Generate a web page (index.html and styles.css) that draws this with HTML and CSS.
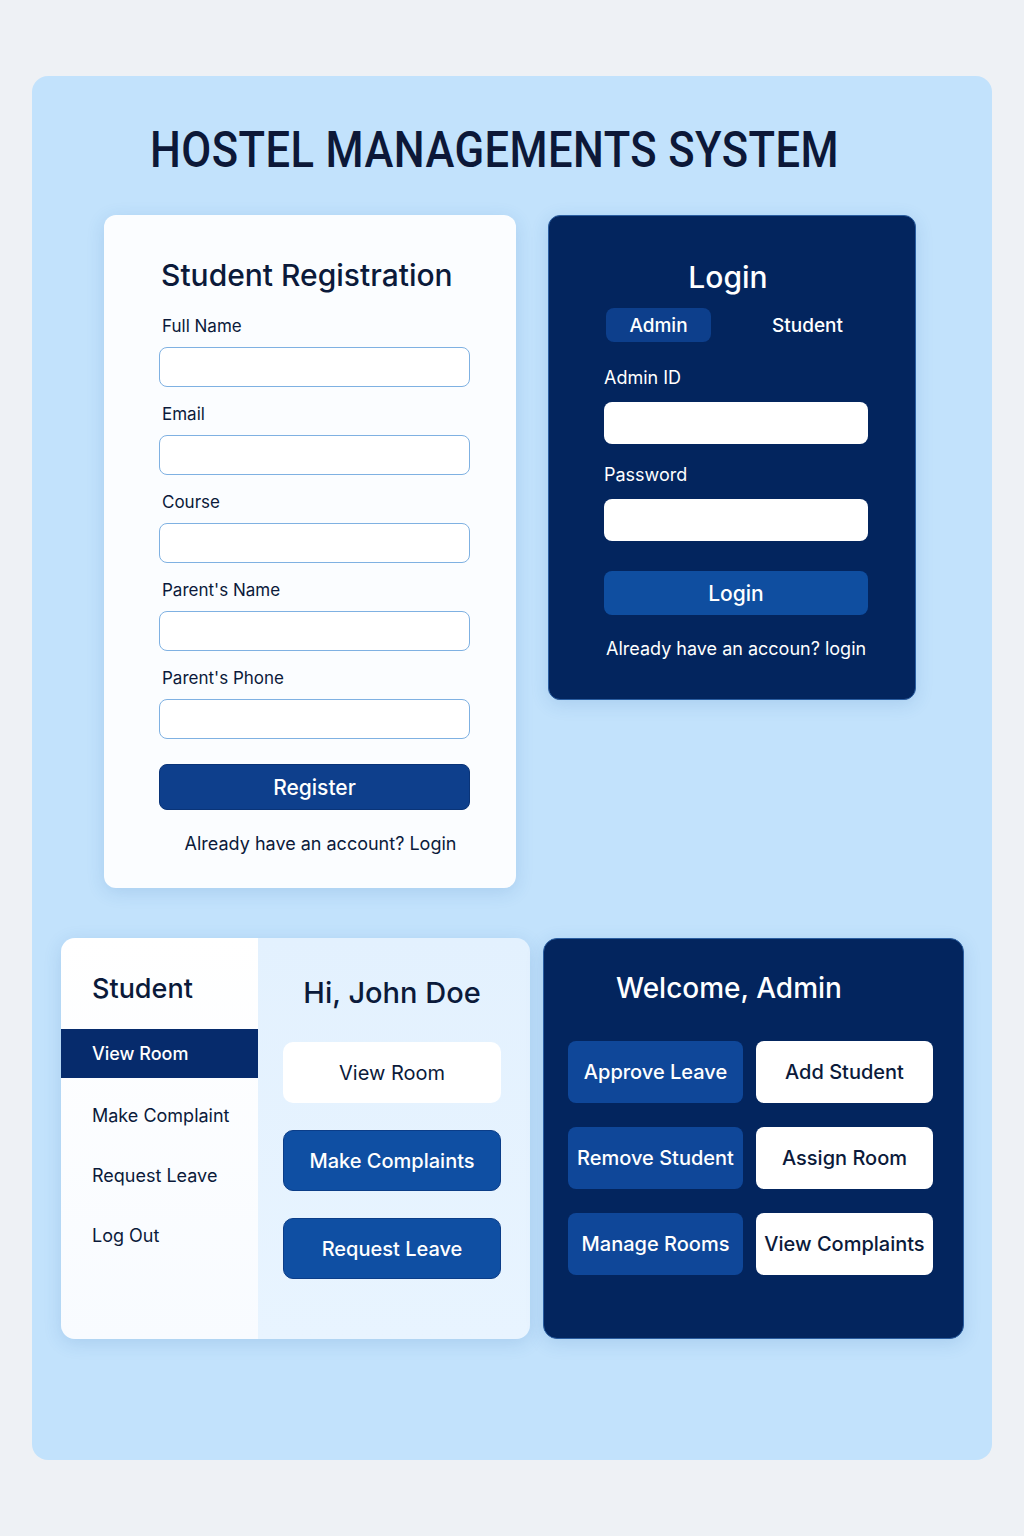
FILE: index.html
```html
<!DOCTYPE html>
<html lang="en">
<head>
<meta charset="utf-8">
<title>Hostel Managements System</title>
<link rel="stylesheet" href="styles.css">
</head>
<body>
<main class="panel">
  <h1 class="page-title">HOSTEL MANAGEMENTS SYSTEM</h1>

  <div class="row-top">
    <section class="card reg">
      <h2 class="reg-title">Student Registration</h2>
      <div class="field">
        <label class="reg-label">Full Name</label>
        <div class="reg-input"></div>
      </div>
      <div class="field">
        <label class="reg-label">Email</label>
        <div class="reg-input"></div>
      </div>
      <div class="field">
        <label class="reg-label">Course</label>
        <div class="reg-input"></div>
      </div>
      <div class="field">
        <label class="reg-label">Parent's Name</label>
        <div class="reg-input"></div>
      </div>
      <div class="field">
        <label class="reg-label">Parent's Phone</label>
        <div class="reg-input"></div>
      </div>
      <button class="reg-btn">Register</button>
      <p class="reg-foot">Already have an account? Login</p>
    </section>

    <section class="card login">
      <h2 class="login-title">Login</h2>
      <div class="tabs">
        <span class="tab active">Admin</span>
        <span class="tab">Student</span>
      </div>
      <label class="login-label first">Admin ID</label>
      <div class="login-input"></div>
      <label class="login-label">Password</label>
      <div class="login-input"></div>
      <button class="login-btn">Login</button>
      <p class="login-foot">Already have an accoun? login</p>
    </section>
  </div>

  <div class="row-bottom">
    <section class="card student">
      <aside class="sidebar">
        <h3 class="side-title">Student</h3>
        <ul class="menu">
          <li class="menu-item active">View Room</li>
          <li class="menu-item">Make Complaint</li>
          <li class="menu-item">Request Leave</li>
          <li class="menu-item">Log Out</li>
        </ul>
      </aside>
      <div class="student-main">
        <h3 class="hi">Hi, John Doe</h3>
        <div class="s-actions">
          <button class="s-btn light">View Room</button>
          <button class="s-btn blue">Make Complaints</button>
          <button class="s-btn blue">Request Leave</button>
        </div>
      </div>
    </section>

    <section class="card admin">
      <h3 class="welcome">Welcome, Admin</h3>
      <div class="a-grid">
        <button class="a-btn blue">Approve Leave</button>
        <button class="a-btn light">Add Student</button>
        <button class="a-btn blue">Remove Student</button>
        <button class="a-btn light">Assign Room</button>
        <button class="a-btn blue">Manage Rooms</button>
        <button class="a-btn light">View Complaints</button>
      </div>
    </section>
  </div>
</main>
</body>
</html>
```

FILE: styles.css
```css
* { box-sizing: border-box; }

body {
  margin: 0;
  background: #eef1f5;
  font-family: "Inter", "Noto Sans", sans-serif;
  color: #0b1a3a;
  padding: 76px 32px 76px 32px;
}

.panel {
  width: 960px;
  height: 1384px;
  background: #c2e2fc;
  border-radius: 16px;
  padding-top: 44px;
}

.page-title {
  margin: 0 0 35px 118px;
  font-family: "Roboto", "Inter", sans-serif;
  font-weight: 500;
  font-size: 50px;
  letter-spacing: 0.5px;
  line-height: 60px;
  color: #0c1838;
  white-space: nowrap;
  transform: scaleX(0.87);
  transform-origin: left center;
}

.row-top {
  display: flex;
  align-items: flex-start;
  gap: 32px;
  padding-left: 72px;
}

.card {
  border-radius: 12px;
  box-shadow: 0 4px 18px rgba(40, 100, 170, 0.16);
}

/* Registration */
.reg {
  width: 412px;
  background: #fbfdff;
  padding: 40px 46px 32px 55px;
}

.reg-title {
  margin: 0 0 19px 2px;
  font-size: 30px;
  font-weight: 500;
  line-height: 40px;
  color: #0b1a3a;
}

.field {
  display: flex;
  flex-direction: column;
  margin-bottom: 15px;
}

.reg-label {
  display: block;
  font-size: 17px;
  line-height: 24px;
  margin: 0 0 9px 3px;
  color: #0b1a3a;
}

.reg-input {
  height: 40px;
  border: 1px solid #7fb1e2;
  border-radius: 8px;
  background: #ffffff;
}

.reg-btn {
  display: block;
  width: 100%;
  height: 46px;
  margin-top: 25px;
  border: 1px solid #0a3478;
  border-radius: 8px;
  background: #0e3f8c;
  color: #ffffff;
  font-family: inherit;
  font-size: 21px;
  font-weight: 500;
}

.reg-foot {
  margin: 22px 0 0 0;
  text-align: center;
  font-size: 18px;
  line-height: 24px;
  padding-left: 12px;
  color: #0b1a3a;
}

/* Login */
.login {
  width: 368px;
  background: #03255e;
  padding: 41px 47px 38px 55px;
  color: #ffffff;
  border: 1px solid #2a5da0;
}

.login-title {
  margin: 0 0 11px 0;
  text-align: center;
  font-size: 30px;
  font-weight: 500;
  line-height: 40px;
  padding-right: 16px;
}

.tabs {
  display: flex;
  gap: 44px;
  padding-left: 2px;
}

.tab {
  width: 105px;
  height: 34px;
  border-radius: 8px;
  display: flex;
  align-items: center;
  justify-content: center;
  font-size: 19px;
  font-weight: 500;
}

.tab.active {
  background: #0d3f8c;
}

.login-label {
  display: block;
  font-size: 18px;
  line-height: 24px;
  margin: 19px 0 12px 0;
}

.login-label.first {
  margin-top: 24px;
}

.login-input {
  height: 42px;
  background: #ffffff;
  border-radius: 8px;
}

.login-btn {
  display: block;
  width: 100%;
  height: 44px;
  margin-top: 30px;
  border: 0;
  border-radius: 8px;
  background: #0f4ea0;
  color: #ffffff;
  font-family: inherit;
  font-size: 21px;
  font-weight: 500;
}

.login-foot {
  margin: 22px 0 0 2px;
  font-size: 18px;
  line-height: 24px;
  white-space: nowrap;
}

/* Bottom row */
.row-bottom {
  display: flex;
  align-items: flex-start;
  gap: 13px;
  padding-left: 29px;
  margin-top: 50px;
}

.student {
  width: 469px;
  height: 401px;
  display: flex;
  overflow: hidden;
  border-radius: 14px;
}

.sidebar {
  width: 197px;
  background: linear-gradient(180deg, #ffffff, #f8fbff);
  padding-top: 33px;
}

.side-title {
  margin: 0 0 22px 31px;
  font-size: 27px;
  font-weight: 500;
  line-height: 36px;
}

.menu {
  list-style: none;
  margin: 0;
  padding: 0;
}

.menu-item {
  height: 60px;
  display: flex;
  align-items: center;
  padding-left: 31px;
  font-size: 18px;
}

.menu-item.active {
  height: 49px;
  margin-bottom: 7px;
  background: #062b6c;
  color: #ffffff;
  font-weight: 500;
}

.student-main {
  flex: 1;
  background: linear-gradient(180deg, #e3f1fe, #e8f4ff);
  padding: 35px 29px 0 25px;
}

.hi {
  margin: 0 0 29px 0;
  text-align: center;
  font-size: 29px;
  font-weight: 500;
  line-height: 40px;
}

.s-actions {
  display: flex;
  flex-direction: column;
  gap: 27px;
}

.s-btn {
  height: 61px;
  border-radius: 10px;
  font-family: inherit;
  font-size: 20px;
  font-weight: 500;
}

.s-btn.light {
  background: #ffffff;
  border: 0;
  color: #0b1a3a;
  font-weight: 400;
}

.s-btn.blue {
  background: #0f4fa3;
  border: 1px solid #0b3d88;
  color: #ffffff;
}

.admin {
  width: 421px;
  height: 401px;
  background: #03255e;
  border-radius: 14px;
  padding: 29px 30px 0 24px;
  color: #ffffff;
  border: 1px solid #2a5da0;
}

.welcome {
  margin: 0 0 33px 48px;
  font-size: 28px;
  font-weight: 500;
  line-height: 40px;
}

.a-grid {
  display: grid;
  grid-template-columns: 175px 177px;
  gap: 24px 13px;
}

.a-btn {
  height: 62px;
  border-radius: 8px;
  font-family: inherit;
  font-size: 20px;
  font-weight: 500;
  padding: 0;
}

.a-btn.blue {
  background: #0f4799;
  border: 0;
  color: #ffffff;
}

.a-btn.light {
  background: #ffffff;
  border: 0;
  color: #0b1a3a;
}
```
